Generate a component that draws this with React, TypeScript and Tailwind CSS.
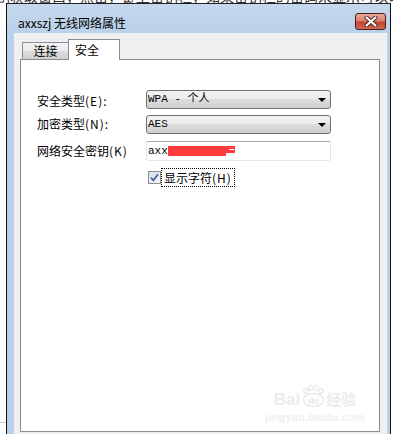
import React from 'react';

const cjk = "font-['Noto_Sans_CJK_SC',sans-serif]";
const mono = "font-['Liberation_Mono','Noto_Sans_CJK_SC',monospace]";

function Combo({ text }: { text: string }) {
  return (
    <div className="flex h-[19px] w-[185px] items-center rounded-[3px] border border-[#707070] bg-[linear-gradient(#f2f2f2,#ebebeb_50%,#dddddd_50%,#cfcfcf)] pl-[1px]">
      <span className={`${mono} text-[11px] leading-none text-black`}>{text}</span>
      <span className="ml-auto mr-[4px] h-0 w-0 border-x-[4px] border-t-[4px] border-x-transparent border-t-black" />
    </div>
  );
}

function CloseButton() {
  return (
    <div className="mt-[9px] flex h-[17px] w-[31px] items-center justify-center rounded-[3px] border border-[#4a1c1c] bg-[linear-gradient(#e9a99b,#d9806f_45%,#c3452f_55%,#cf6a52)]">
      <svg width="14" height="11" viewBox="0 0 14 11">
        <path d="M2.5 1.5 L11.5 9.5 M11.5 1.5 L2.5 9.5" stroke="#4a2020" strokeWidth="4" strokeLinecap="round" />
        <path d="M2.5 1.5 L11.5 9.5 M11.5 1.5 L2.5 9.5" stroke="#ffffff" strokeWidth="2.2" strokeLinecap="round" />
      </svg>
    </div>
  );
}

function Watermark() {
  return (
    <div className="absolute bottom-[8px] right-[14px] flex flex-col items-center text-[#ececec]">
      <div className="flex items-end gap-[1px]">
        <span className="font-['Liberation_Sans',sans-serif] text-[17px] font-bold leading-[15px]">Bai</span>
        <svg width="24" height="22" viewBox="0 0 24 22">
          <circle cx="5" cy="6" r="2.3" fill="none" stroke="#e8e8e8" strokeWidth="1.2" />
          <circle cx="10" cy="2.8" r="2.3" fill="none" stroke="#e8e8e8" strokeWidth="1.2" />
          <circle cx="15" cy="2.8" r="2.3" fill="none" stroke="#e8e8e8" strokeWidth="1.2" />
          <circle cx="20" cy="6" r="2.3" fill="none" stroke="#e8e8e8" strokeWidth="1.2" />
          <ellipse cx="12.5" cy="15" rx="10" ry="6.5" fill="none" stroke="#e8e8e8" strokeWidth="1.3" />
          <text x="12.5" y="18.5" textAnchor="middle" fontSize="9" fontWeight="bold" fill="#e8e8e8" fontFamily="Liberation Sans, sans-serif">du</text>
        </svg>
        <span className={`${cjk} text-[15px] font-bold leading-[16px]`}>经验</span>
      </div>
      <span className="mt-[4px] font-['Liberation_Sans',sans-serif] text-[11px] font-bold leading-[12px] tracking-[0.2px] text-[#efefef]">jingyan.baidu.com</span>
    </div>
  );
}

export default function App() {
  return (
    <div className="relative h-[434px] w-[393px] overflow-hidden bg-white">
      {/* page text behind the dialog, mostly hidden */}
      <div className="h-[3px] overflow-hidden whitespace-nowrap">
        <div className={`${cjk} -ml-[4px] -mt-[12px] text-[14px] leading-[16px] text-[#333]`}>
          钥获取窗口，点击，键上密钥栏，如果密钥栏的密码未显示可以勾选显示字
        </div>
      </div>
      <div className="absolute bottom-[11px] left-0 h-px w-[6px] bg-[#c8c8c8]" />

      <div className="ml-[6px] flex h-[431px] w-[385px] flex-col border-x border-t border-x-[#111] border-t-[#222] bg-[#b9d1ea]">
        <div className="flex h-[29px] shrink-0 items-start justify-between bg-[linear-gradient(#c5d8ed,#b9d1ea)] pl-[11px] pr-[4px]">
          <span className={`${cjk} mt-[11px] text-[12px] leading-[16px] text-black`}>axxszj 无线网络属性</span>
          <CloseButton />
        </div>

        <div className="ml-[7px] mr-[3px] flex flex-1 flex-col bg-[#f0f0f0] pl-[6px] pr-[7px] pt-[6px]">
          <div className="flex h-[20px] items-end pl-[2px]">
            <div className={`${cjk} flex h-[17px] w-[47px] items-center justify-center border-x border-t border-[#898c95] bg-[linear-gradient(#f3f3f3,#ebebeb_50%,#dddddd_50%,#cfcfcf)] text-[12px] leading-none text-black`}>
              连接
            </div>
            <div className={`${cjk} relative z-10 -mb-px -ml-px flex h-[21px] w-[52px] items-start border-x border-t border-[#898c95] bg-white pl-[6px] pt-[3px] text-[12px] leading-[14px] text-black`}>
              安全
            </div>
          </div>

          <div className="relative mb-[2px] flex-1 border border-[#898c95] bg-white pl-[16px] pt-[30px]">
            <div className="flex h-[19px] items-center">
              <span className={`${cjk} mt-[3px] w-[109px] text-[12px] leading-none text-black`}>
                安全类型<span className="tracking-[1px]">(E):</span>
              </span>
              <Combo text="WPA - 个人" />
            </div>
            <div className="mt-[6px] flex h-[19px] items-center">
              <span className={`${cjk} -mt-[2px] w-[109px] text-[12px] leading-none text-black`}>
                加密类型<span className="tracking-[1px]">(N):</span>
              </span>
              <Combo text="AES" />
            </div>
            <div className="mt-[7px] flex h-[20px] items-center">
              <span className={`${cjk} w-[109px] text-[12px] leading-none text-black`}>
                网络安全密钥<span className="tracking-[1px]">(K)</span>
              </span>
              <div className="relative flex h-[20px] w-[185px] items-center rounded-[2px] border border-[#e2e3ea] border-t-[#abadb3] border-b-[#e3e9ef] bg-white pl-[1px]">
                <span className={`${mono} text-[11px] leading-none text-black`}>axxs</span>
                <div className="absolute left-[21px] top-[4px] h-[7px] w-[67px] bg-[#ff3b3b]" />
                <div className="absolute left-[21px] top-[11px] h-[3px] w-[58px] bg-[#ff3b3b]" />
                <div className="absolute left-[82px] top-[7px] h-px w-[5px] bg-white" />
              </div>
            </div>
            <div className="mt-[7px] flex h-[19px] items-center pl-[111px]">
              <div className="flex h-[13px] w-[13px] items-center justify-center border border-[#8f8f8f] bg-[linear-gradient(135deg,#d8dde6,#f6f7f9)]">
                <svg width="9" height="9" viewBox="0 0 9 9">
                  <path d="M1 4.6 L3.4 7.4 L8 1.2" fill="none" stroke="#4a63a8" strokeWidth="1.8" />
                </svg>
              </div>
              <span className={`${cjk} flex h-[19px] items-center border border-dotted border-black px-[2px] text-[12px] leading-none text-black`}>
                显示字符<span className="tracking-[1px]">(H)</span>
              </span>
            </div>

            <Watermark />
          </div>
        </div>
      </div>
    </div>
  );
}
